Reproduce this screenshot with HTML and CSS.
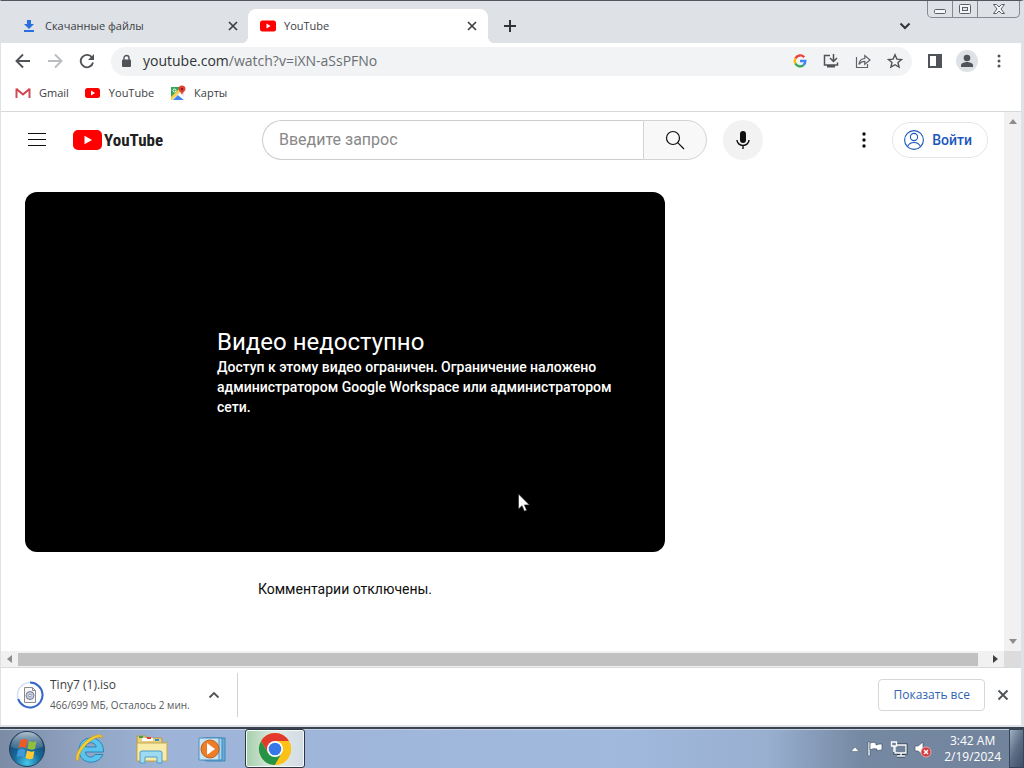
FILE: index.html
```html
<!DOCTYPE html>
<html lang="ru">
<head>
<meta charset="utf-8">
<title>YouTube</title>
<link rel="stylesheet" href="styles.css">
</head>
<body>
<div class="window">
  <header class="titlebar">
    <div class="tab">
      <svg width="16" height="16" viewBox="0 0 16 16"><path d="M6 2h4v4h3l-5 5-5-5h3zM3 12h10v2H3z" fill="#2a6fdf"/></svg>
      <span class="tab-title">Скачанные файлы</span>
      <button class="icon-btn tab-close" aria-label="Закрыть"><svg width="12" height="12" viewBox="0 0 12 12"><path d="M2 2l8 8M10 2l-8 8" stroke="#3c4043" stroke-width="1.7"/></svg></button>
    </div>
    <div class="tab tab-active">
      <svg width="16" height="16" viewBox="0 0 16 16"><rect y="2.500" width="16" height="11" rx="2.500" fill="#f00"/><path d="M6.500 5.600v4.800L10.600 8z" fill="#fff"/></svg>
      <span class="tab-title">YouTube</span>
      <button class="icon-btn tab-close" aria-label="Закрыть"><svg width="12" height="12" viewBox="0 0 12 12"><path d="M2 2l8 8M10 2l-8 8" stroke="#3c4043" stroke-width="1.7"/></svg></button>
    </div>
    <button class="icon-btn new-tab" aria-label="Новая вкладка"><svg width="14" height="14" viewBox="0 0 14 14"><path d="M7 1v12M1 7h12" stroke="#303438" stroke-width="2"/></svg></button>
    <button class="icon-btn tab-search" aria-label="Поиск вкладок"><svg width="14" height="14" viewBox="0 0 14 14"><path d="M2.500 4.500L7 9l4.500-4.500" fill="none" stroke="#303438" stroke-width="2"/></svg></button>
    <div class="caption">
      <button aria-label="Свернуть"><svg width="14" height="12" viewBox="0 0 14 12"><rect x="1.500" y="6.500" width="11" height="4" rx="1" fill="#f4f5f7" stroke="#5c6067"/></svg></button>
      <button aria-label="Развернуть"><svg width="14" height="12" viewBox="0 0 14 12"><rect x="1.500" y="1.500" width="11" height="9" rx="1" fill="#f4f5f7" stroke="#5c6067"/><rect x="4.500" y="4.500" width="5" height="3" fill="#dfe2e7" stroke="#5c6067"/></svg></button>
      <button class="caption-close" aria-label="Закрыть окно"><svg width="14" height="12" viewBox="0 0 14 12"><path d="M1.500 1.500h3L7 4l2.500-2.500h3L9 6l3.500 4.500h-3L7 8l-2.500 2.500h-3L5 6z" fill="#f4f5f7" stroke="#5c6067"/></svg></button>
    </div>
  </header>

  <nav class="toolbar">
    <button class="icon-btn" aria-label="Назад"><svg width="16" height="16" viewBox="0 0 16 16"><path d="M15 8H2M8 1.500L1.500 8 8 14.500" fill="none" stroke="#505458" stroke-width="1.900"/></svg></button>
    <button class="icon-btn" aria-label="Вперёд"><svg width="16" height="16" viewBox="0 0 16 16"><path d="M1 8h13M8 1.500L14.500 8 8 14.500" fill="none" stroke="#b9bcc0" stroke-width="1.900"/></svg></button>
    <button class="icon-btn" aria-label="Обновить"><svg width="16" height="16" viewBox="0 0 16 16"><path d="M13 4.500A6.200 6.200 0 1 0 14 9.500" fill="none" stroke="#505458" stroke-width="1.900"/><path d="M15 1v6H9z" fill="#505458"/></svg></button>
    <div class="omnibox">
      <svg width="14" height="14" viewBox="0 0 14 14"><rect x="3" y="5.500" width="9" height="7.500" rx="1" fill="#505458"/><path d="M5 6V4a2.500 2.500 0 0 1 5 0v2" fill="none" stroke="#505458" stroke-width="1.400"/></svg>
      <a class="url" href="#"><span class="host">youtube.com</span>/watch?v=iXN-aSsPFNo</a>
      <button class="icon-btn" aria-label="Google"><svg width="14" height="14" viewBox="0 0 14 14"><g fill="none" stroke-width="2.400"><path d="M11.200 3.200A5.300 5.300 0 0 0 2.400 4.500" stroke="#ea4335"/><path d="M2.400 4.500a5.300 5.300 0 0 0 0 5" stroke="#fbbc05"/><path d="M2.400 9.500a5.300 5.300 0 0 0 8 1.700" stroke="#34a853"/><path d="M10.400 11.200A5.300 5.300 0 0 0 12.300 7H7" stroke="#4285f4"/></g></svg></button>
      <button class="icon-btn" aria-label="Установить"><svg width="16" height="16" viewBox="0 0 16 16"><path d="M7 2.500H1.500v9.500h13V9.500M10.500 1v7M7 5l3.500 3.500L14 5" fill="none" stroke="#505458" stroke-width="1.500"/><path d="M4 12h8v2.500H4z" fill="#505458"/></svg></button>
      <button class="icon-btn" aria-label="Поделиться"><svg width="16" height="16" viewBox="0 0 16 16"><path d="M1.500 4v10.500h11V11M4 11.500c.3-4 2.500-5.800 5.800-6V2.500L15 7l-5.200 4.200V8.300C7.500 8.300 5.500 9 4 11.500z" fill="none" stroke="#5f6368" stroke-width="1.200"/></svg></button>
      <button class="icon-btn" aria-label="Добавить в закладки"><svg width="16" height="16" viewBox="0 0 16 16"><path d="M8 1.800l1.900 4.300 4.600.4-3.500 3 1.100 4.600L8 11.700l-4.100 2.400L5 9.500l-3.500-3 4.600-.4z" fill="none" stroke="#505458" stroke-width="1.400"/></svg></button>
    </div>
    <button class="icon-btn" aria-label="Боковая панель"><svg width="16" height="16" viewBox="0 0 16 16"><path d="M1 1h14v14H1zM3 3v10h6V3z" fill="#505458" fill-rule="evenodd"/></svg></button>
    <button class="icon-btn profile" aria-label="Профиль"><svg width="22" height="22" viewBox="0 0 22 22"><circle cx="11" cy="11" r="11" fill="#dee1e6"/><circle cx="11" cy="8" r="3.300" fill="#505458"/><path d="M5 17v-1.500C5 12.800 9 12 11 12s6 .8 6 3.500V17z" fill="#505458"/></svg></button>
    <button class="icon-btn" aria-label="Меню"><svg width="16" height="16" viewBox="0 0 16 16" fill="#505458"><circle cx="8" cy="3" r="1.500"/><circle cx="8" cy="8" r="1.500"/><circle cx="8" cy="13" r="1.500"/></svg></button>
  </nav>

  <nav class="bookmarks">
    <a href="#"><svg width="16" height="16" viewBox="0 0 16 16"><path d="M1.500 3.500v9.500M14.500 3.500v9.500" stroke="#c9505a" stroke-width="2"/><path d="M1.500 4L8 9.500 14.500 4" fill="none" stroke="#d83f48" stroke-width="2"/></svg>Gmail</a>
    <a href="#"><svg width="16" height="16" viewBox="0 0 16 16"><rect y="3" width="15" height="10" rx="2.500" fill="#f00"/><path d="M6 5.600v4.800L10 8z" fill="#fff"/></svg>YouTube</a>
    <a href="#"><svg width="16" height="16" viewBox="0 0 16 16"><path d="M1 2h13v13H1z" fill="#e8eaed"/><path d="M1 2h9v3L1 13z" fill="#34a853"/><path d="M1 12l8-8 2 2L2 15H1z" fill="#fbd04a"/><path d="M3 15l5-5 6 5z" fill="#4285f4"/><path d="M8 10l2-2 4 4v3z" fill="#fff"/><circle cx="4.500" cy="5.500" r="1.500" fill="none" stroke="#fff"/><path d="M12 10C11.500 7 8.500 6.500 8.500 4a3.500 3.500 0 0 1 7 0c0 2.500-3 3-3.500 6z" fill="#e04438"/><circle cx="12" cy="4" r="1.200" fill="#8c1a12"/></svg>Карты</a>
  </nav>

  <div class="viewport">
    <main class="page">
      <header class="masthead">
        <button class="icon-btn guide" aria-label="Меню YouTube"><svg width="20" height="16" viewBox="0 0 20 16"><path d="M1 1.500h18M1 7.500h18M1 13.500h18" stroke="#0f0f0f" stroke-width="1"/></svg></button>
        <a class="logo" href="#"><svg width="29" height="20" viewBox="0 0 29 20"><rect width="29" height="20" rx="5" fill="#f00"/><path d="M11.500 5.700v8.600L19 10z" fill="#fff"/></svg><span>YouTube</span></a>
        <form class="search">
          <input type="text" placeholder="Введите запрос" aria-label="Введите запрос">
          <button type="button" aria-label="Поиск"><svg width="20" height="20" viewBox="0 0 20 20"><circle cx="8" cy="8" r="6.500" fill="none" stroke="#0f0f0f" stroke-width="1.200"/><path d="M12.700 12.700L19 19" stroke="#0f0f0f" stroke-width="1.200"/></svg></button>
        </form>
        <button class="icon-btn mic" aria-label="Голосовой поиск"><svg width="20" height="20" viewBox="0 0 20 20"><rect x="7" y="1" width="6" height="12" rx="3" fill="#0f0f0f"/><path d="M4 10a6 5.500 0 0 0 12 0M10 15.500V19" fill="none" stroke="#0f0f0f" stroke-width="1.400"/></svg></button>
        <button class="icon-btn settings" aria-label="Настройки"><svg width="16" height="16" viewBox="0 0 16 16" fill="#0f0f0f"><circle cx="8" cy="2" r="1.700"/><circle cx="8" cy="8" r="1.700"/><circle cx="8" cy="14" r="1.700"/></svg></button>
        <button class="signin"><svg width="20" height="20" viewBox="0 0 20 20" fill="none" stroke="#1a56bd" stroke-width="1.100"><circle cx="10" cy="10" r="9.400"/><circle cx="10" cy="7" r="3.600"/><path d="M3.500 16.500C5 13.500 7.500 12.500 10 12.500s5 1 6.500 4"/></svg>Войти</button>
      </header>
      <section class="primary">
        <div class="player">
          <h1>Видео недоступно</h1>
          <p>Доступ к этому видео ограничен. Ограничение наложено администратором Google Workspace или администратором сети.</p>
          <svg class="cursor" width="12" height="19" viewBox="0 0 12 19"><path d="M.5 1v15l3.500-3.300 2.400 5.500 2.300-1-2.300-5.300h5z" fill="#fff" stroke="#222" stroke-width=".6"/></svg>
        </div>
        <p class="comments">Комментарии отключены.</p>
      </section>
    </main>
    <div class="vscroll"><svg width="8" height="5" viewBox="0 0 8 5"><path d="M0 5l4-5 4 5z" fill="#8d8d8d"/></svg><svg width="8" height="5" viewBox="0 0 8 5"><path d="M0 0h8L4 5z" fill="#8d8d8d"/></svg></div>
  </div>
  <div class="hscroll">
    <svg width="17" height="8" viewBox="0 0 17 8"><path d="M11 0v8L6 4z" fill="#8d8d8d"/></svg>
    <div class="thumb"></div>
    <svg class="to-right" width="26" height="8" viewBox="0 0 26 8"><path d="M15 0v8l5-4z" fill="#404040"/></svg>
    <div class="corner"></div>
  </div>

  <footer class="shelf">
    <svg width="28" height="28" viewBox="0 0 28 28"><circle cx="14" cy="14" r="12.500" fill="none" stroke="#d5def2" stroke-width="1.500"/><path d="M14 1.500A12.500 12.500 0 1 1 2.200 18" fill="none" stroke="#3566c8" stroke-width="2"/><path d="M8.500 6.500h8l3 3v12h-11z" fill="#f7f7f7" stroke="#8b8b8b"/><path d="M16.500 6.500v3h3" fill="none" stroke="#8b8b8b"/><circle cx="14" cy="14.500" r="4" fill="#c5cbdc" stroke="#757d94"/><circle cx="14" cy="14.500" r="1.300" fill="#fff" stroke="#757d94" stroke-width=".7"/></svg>
    <div class="file"><div class="file-name">Tiny7 (1).iso</div><div class="file-status">466/699 МБ, Осталось 2 мин.</div></div>
    <button class="icon-btn expand" aria-label="Действия"><svg width="12" height="12" viewBox="0 0 12 12"><path d="M1.500 8.500L6 4l4.500 4.500" fill="none" stroke="#505458" stroke-width="1.800"/></svg></button>
    <div class="divider"></div>
    <button class="show-all">Показать все</button>
    <button class="icon-btn" aria-label="Закрыть панель"><svg width="12" height="12" viewBox="0 0 12 12"><path d="M1.500 1.500l9 9M10.500 1.500l-9 9" stroke="#505458" stroke-width="1.900"/></svg></button>
  </footer>
</div>

<footer class="taskbar">
  <button class="task start" aria-label="Пуск"><svg width="38" height="38" viewBox="0 0 38 38"><defs><radialGradient id="orb" cx=".5" cy=".9" r=".85"><stop offset="0" stop-color="#45c8e8"/><stop offset=".45" stop-color="#176a9c"/><stop offset="1" stop-color="#173c5d"/></radialGradient><linearGradient id="shine" x2="0" y2="1"><stop offset="0" stop-color="#e6eef5"/><stop offset="1" stop-color="#7c9ab3" stop-opacity=".4"/></linearGradient></defs><circle cx="19" cy="19" r="17.500" fill="url(#orb)" stroke="#233f5c"/><path d="M3 17a16 15 0 0 1 32 0q-16 5-32 0z" fill="url(#shine)" opacity=".75"/><path d="M12.500 10q4-2 7 0l-1.500 8q-4-2-7.500 0z" fill="#ec5b25"/><path d="M21 11q4 2 7.500 0L27 19q-4 1.500-7.500-.5z" fill="#91bf3c"/><path d="M10 20q4-2 7.500 0L16 27q-3.500-1.500-7.500 0z" fill="#3f99db"/><path d="M19 20.500q4 2 7.500.5L25 28.500q-4 1.500-7.500-.5z" fill="#fdc834"/></svg></button>
  <button class="task" aria-label="Internet Explorer"><svg width="36" height="36" viewBox="0 0 36 36"><path d="M31.500 21H13.500c.3 6 7.500 6.500 9.500 2.500h7.800c-4 11-23.300 10.500-23.800-4C7 2.500 32 2.500 31.500 21zM13.500 16h10.700c-.7-5.500-9.700-6-10.700 0z" fill="#5cc4ec" fill-rule="evenodd" stroke="#2586bb"/><path d="M5 30C1 25 11 9 22 5c6-2.500 9-1 8.500 2-1.500-2-5-1-8 .5C14 12 6 22 6.500 29z" fill="#f5cd35" stroke="#c99d20" stroke-width=".7"/></svg></button>
  <button class="task" aria-label="Проводник"><svg width="36" height="36" viewBox="0 0 36 36"><path d="M4 8V5h9v2h16v23H4z" fill="#e8cf79" stroke="#b9984a"/><path d="M9 7h11v3H9z" fill="#fff"/><path d="M6 5h4v2H6z" fill="#39a548"/><path d="M14 6h4v2h-4z" fill="#e33d2b"/><path d="M22 8h4v2h-4z" fill="#2f93d1"/><path d="M4 12h29l1-2v20H4z" fill="#f9eba8" stroke="#c6a756"/><path d="M7 32V22q0-2 2-2h18q2 0 2 2v10h-5v-6H12v6z" fill="#9edbf3" stroke="#4c9cc8"/></svg></button>
  <button class="task" aria-label="Проигрыватель"><svg width="36" height="36" viewBox="0 0 36 36"><path d="M12 7h19v23H12z" fill="#68add8" stroke="#3d86b9"/><path d="M9 7h19v22H9z" fill="#a6d3ed" stroke="#3d86b9"/><path d="M5 7h20v22H5z" fill="#c5e4f4" stroke="#4e91bd"/><circle cx="16" cy="18" r="9" fill="#ed7d27" stroke="#c65f18"/><path d="M13 12v12l8-6z" fill="#fff"/></svg></button>
  <button class="task task-active" aria-label="Chrome"><svg width="34" height="34" viewBox="0 0 34 34"><circle cx="17" cy="17" r="16" fill="#fbc116"/><path d="M17 9h13.860A16 16 0 0 0 3.140 9l6.900 12z" fill="#e23b2e"/><path d="M3.140 9A16 16 0 0 0 17 33l6.900-12L17 17l-7 4z" fill="#259447"/><path d="M17 33A16 16 0 0 0 30.860 9H17l6.900 12z" fill="#fbc116"/><circle cx="17" cy="17" r="8" fill="#fff"/><circle cx="17" cy="17" r="6.300" fill="#3778e8"/></svg></button>
  <div class="tray">
    <button class="icon-btn" aria-label="Скрытые значки"><svg width="10" height="6" viewBox="0 0 10 6"><path d="M1 5.500L5 1l4 4.500z" fill="#fff" stroke="#44566d" stroke-width=".5"/></svg></button>
    <button class="icon-btn" aria-label="Центр поддержки"><svg width="18" height="18" viewBox="0 0 18 18"><path d="M2 2h2v14H2z" fill="#fff" stroke="#42546c" stroke-width=".6"/><path d="M4 3q3-1.500 6 0v2q3-1.500 6-1v6q-3 0-5 1V9Q7 8 4 10z" fill="#fff" stroke="#42546c" stroke-width=".7"/></svg></button>
    <button class="icon-btn" aria-label="Сеть"><svg width="18" height="18" viewBox="0 0 18 18"><path d="M5 5h11v8H5zM11 13v3M7 16h8" fill="#6d7f96" stroke="#28384c" stroke-width="3"/><path d="M5 5h11v8H5zM11 13v3M7 16h8" fill="#718399" stroke="#fff" stroke-width="1.300"/><path d="M1.500 2h5v4h-5z" fill="#718399" stroke="#fff" stroke-width="1.300"/><path d="M4 6v6" stroke="#fff" stroke-width="1.500"/></svg></button>
    <button class="icon-btn" aria-label="Громкость"><svg width="18" height="18" viewBox="0 0 18 18"><path d="M1 6h3l5-4v13l-5-4H1z" fill="#fff" stroke="#42546c" stroke-width=".7"/><circle cx="12" cy="12" r="5" fill="#d43a3d" stroke="#f2b9ba" stroke-width=".8"/><path d="M10 10l4 4M14 10l-4 4" stroke="#fff" stroke-width="1.500"/></svg></button>
  </div>
  <time class="clock"><span>3:42 AM</span><span>2/19/2024</span></time>
  <button class="peek" aria-label="Рабочий стол"></button>
</footer>
</body>
</html>
```
FILE: styles.css
```css
* { box-sizing: border-box; }
body { margin: 0; min-height: 100vh; display: flex; flex-direction: column; background: #fff; color: #3c4043; font: 12px/16px "Open Sans", "Noto Sans", sans-serif; }
button { font: inherit; margin: 0; padding: 0; border: 0; background: none; color: inherit; }
a { color: inherit; text-decoration: none; }
svg { display: block; flex: none; }
.icon-btn { display: flex; align-items: center; justify-content: center; flex: none; }

.window { flex: 1; display: flex; flex-direction: column; border: solid #dee1e6; border-width: 0 3px 2px 1px; border-top: 1px solid #55545c; }
.titlebar { display: flex; align-items: center; height: 42px; padding-left: 8px; background: #dee1e6; }
.tab { display: flex; align-items: center; gap: 8px; width: 239px; height: 34px; margin-top: 8px; padding: 0 9px 0 12px; }
.tab-title { flex: 1; font-size: 11px; }
.tab-active { position: relative; width: 240px; padding-right: 10px; background: #fff; border-radius: 8px 8px 0 0; }
.tab-active::before, .tab-active::after { content: ""; position: absolute; bottom: 0; width: 6px; height: 6px; }
.tab-active::before { right: 100%; background: radial-gradient(circle at 0 0, transparent 6px, #fff 6px); }
.tab-active::after { left: 100%; background: radial-gradient(circle at 100% 0, transparent 6px, #fff 6px); }
.new-tab { width: 28px; margin: 8px auto 0 8px; }
.tab-search { margin: 8px 15px 0 0; }
.caption { display: flex; align-self: flex-start; height: 17px; margin-right: 1px; border: 1px solid #85888e; border-top: 0; border-radius: 0 0 5px 5px; }
.caption button { display: flex; justify-content: center; align-items: center; width: 25px; border-right: 1px solid #85888e; }
.caption .caption-close { width: 41px; border: 0; }

.toolbar { display: flex; align-items: center; gap: 16px; height: 36px; padding: 0 14px; }
.omnibox { flex: 1; display: flex; align-items: center; gap: 16px; height: 29px; padding: 0 9px 0 8px; margin-right: -1px; border-radius: 15px; background: #f1f3f4; }
.url { flex: 1; margin-left: -6px; font-size: 14px; line-height: 20px; color: #6a6e73; }
.host { color: #303438; }
.profile { margin: 0 -3px; }
.bookmarks { display: flex; align-items: center; gap: 16px; height: 33px; padding: 0 14px 5px; border-bottom: 1px solid #d6d8da; font-size: 11px; }
.bookmarks a { display: flex; align-items: center; gap: 8px; }

.viewport { flex: 1; display: flex; }
.page { flex: 1; min-width: 0; padding: 0 16px 0 24px; font-family: Roboto, sans-serif; color: #0f0f0f; }
.masthead { display: flex; align-items: center; height: 56px; }
.guide { width: 24px; }
.logo { display: flex; align-items: center; gap: 2px; width: 186px; margin-left: 24px; color: #212121; font: bold 17px/24px "Roboto Condensed", "Liberation Sans Narrow", "Open Sans Condensed", "DejaVu Sans Condensed", sans-serif; }
.mic, .search { flex: none; }
.search { display: flex; flex: 0 1 445px; height: 40px; margin-left: 3px; }
.search input { flex: 1; min-width: 0; padding: 0 16px; border: 1px solid #ccc; border-right: 0; border-radius: 20px 0 0 20px; background: #fff; font: 16px/24px Roboto, sans-serif; color: #0f0f0f; }
.search input::placeholder { color: #888; opacity: 1; }
.search button { display: flex; align-items: center; justify-content: center; width: 64px; border: 1px solid #d3d3d3; border-radius: 0 20px 20px 0; background: #f8f8f8; }
.mic { width: 40px; height: 40px; margin-left: 16px; border-radius: 50%; background: #f2f2f2; }
.settings { margin-left: auto; }
.signin { display: flex; align-items: center; gap: 8px; height: 36px; margin-left: 20px; padding: 0 15px 0 11px; border: 1px solid #e5e5e5; border-radius: 18px; color: #1a56bd; font-weight: 500; font-size: 14px; }
.primary { width: 640px; max-width: 100%; margin-top: 24px; }
.player { position: relative; display: flex; flex-direction: column; justify-content: center; aspect-ratio: 16 / 9; padding: 0 24px 0 192px; border-radius: 12px; background: #000; color: #fff; }
.player h1 { margin: 0; font-weight: 400; font-size: 24px; line-height: 30px; }
.player p { margin: 0; font-weight: 500; font-size: 14px; line-height: 20px; }
.cursor { position: absolute; left: 493px; top: 301px; }
.comments { margin: 27px 0 0; text-align: center; font-size: 14px; line-height: 20px; }
.vscroll { display: flex; flex-direction: column; justify-content: space-between; align-items: center; width: 17px; padding: 7px 0; background: #f1f1f1; }
.hscroll { display: flex; align-items: center; height: 17px; background: #f1f1f1; border-bottom: 1px solid #d8dadc; }
.thumb { flex: 1; height: 13px; background: #c1c1c1; }
.corner { width: 17px; height: 100%; background: #dcdcdc; }

.shelf { display: flex; align-items: center; height: 57px; padding: 0 12px 3px 15px; background: #fff; }
.file { width: 144px; margin-left: 6px; white-space: nowrap; }
.file-name { line-height: 20px; }
.file-status { font-size: 10px; line-height: 20px; color: #55585c; }
.expand { margin: 0 17px 0 14px; }
.divider { width: 1px; height: 44px; margin-right: auto; background: #d0d2d5; }
.show-all { height: 32px; margin-right: 12px; padding: 0 14px; border: 1px solid #d5d7da; border-radius: 4px; color: #2f62b3; }

.taskbar { display: flex; align-items: center; height: 41px; border-top: 2px solid #3b4352; box-shadow: inset 0 1px #c2cfdf; background: linear-gradient(90deg, #7b8ba5 0, #90a3c1 8%, #9db4d8 16%, #a1b9dd 60%, #98afd0 75%, #7689a3 84%, #71839b 100%); }
.task { display: flex; align-items: center; justify-content: center; width: 61px; height: 39px; }
.start { width: 54px; margin-right: 5px; }
.task-active { width: 60px; margin-left: 3px; border: 1px solid #30363f; border-radius: 3px; box-shadow: inset 0 0 0 1px #f4faf7; background: linear-gradient(90deg, #a5cfaa, #e0ebe7 50%, #d2dbe4); }
.tray { display: flex; align-items: center; gap: 6px; margin-left: auto; }
.clock { display: flex; flex-direction: column; align-items: center; margin: 0 8px 0 12px; color: #fff; }
.peek { width: 15px; height: 39px; border: 1px solid #35465b; background: linear-gradient(115deg, #a0afc0, #5c6e85 50%, #3d5068); }
```
